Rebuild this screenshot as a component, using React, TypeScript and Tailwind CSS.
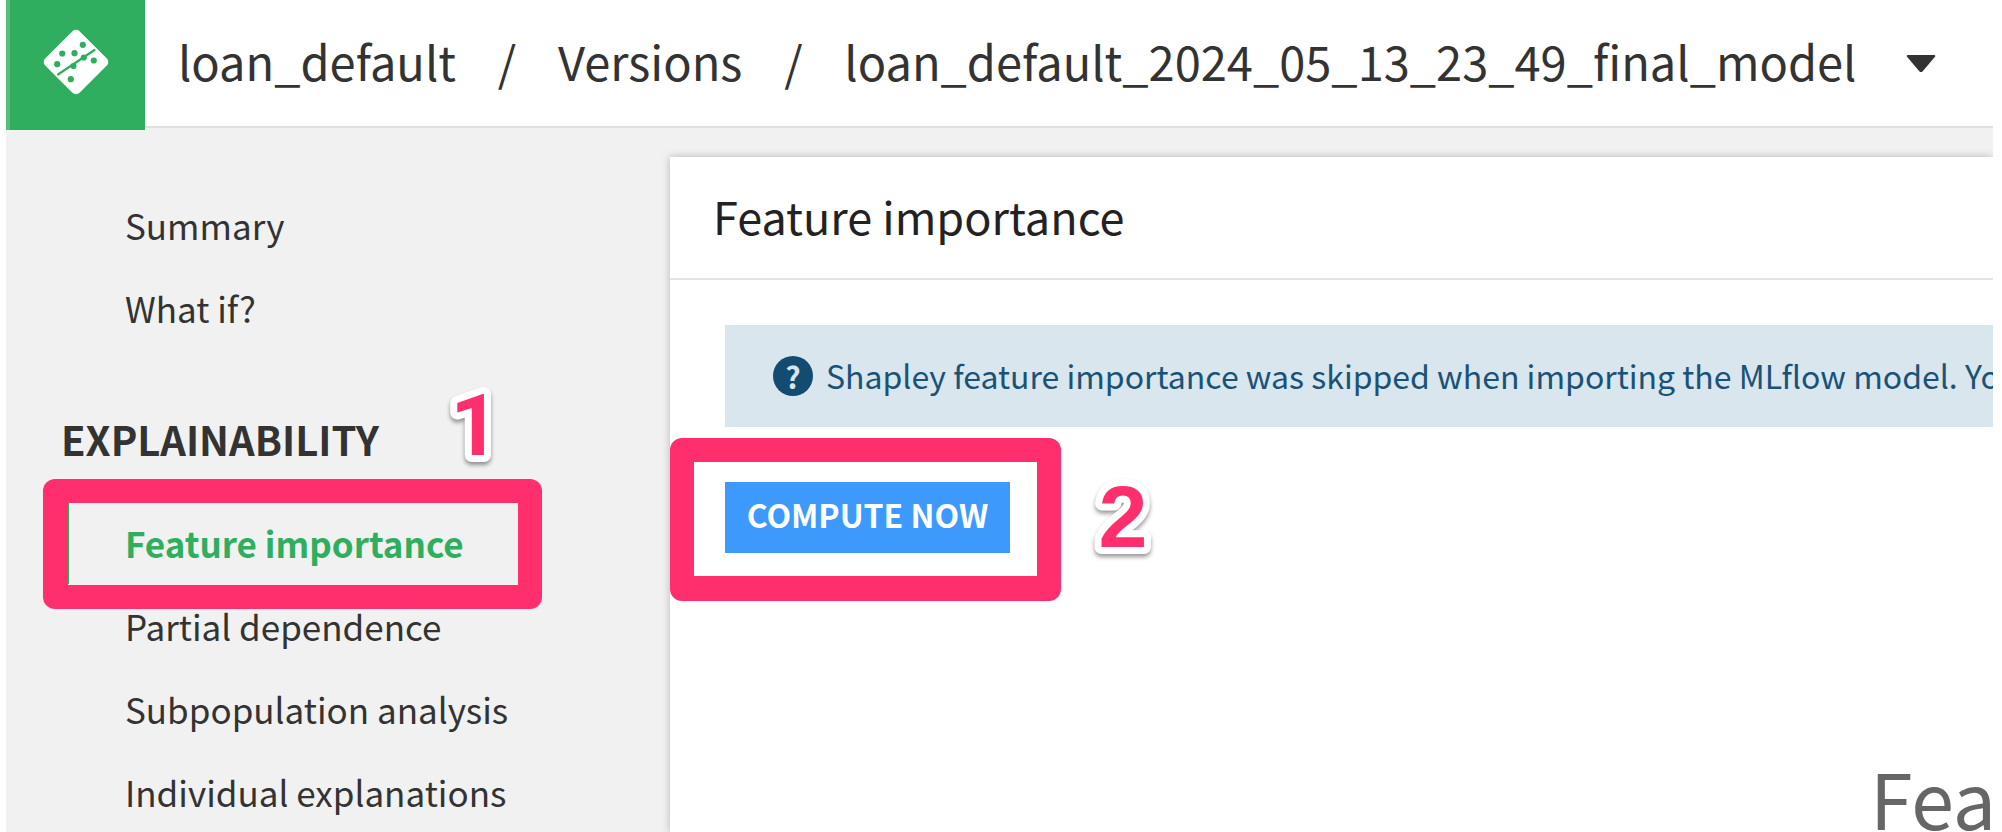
const topItems = ["Summary", "What if?"];
const explainItems = [
  "Feature importance",
  "Partial dependence",
  "Subpopulation analysis",
  "Individual explanations",
];

function Logo() {
  return (
    <svg viewBox="0 0 66 66" className="size-[66px]" aria-hidden="true">
      <rect x="8.700" y="8.700" width="48.600" height="48.600" rx="5" fill="#fff" transform="rotate(45 33 33)" />
      <g fill="#2eae5e">
        <circle cx="39.800" cy="15.800" r="3.100" />
        <circle cx="19.200" cy="24.500" r="3.100" />
        <circle cx="31.500" cy="24.200" r="3.100" />
        <circle cx="14.200" cy="35.200" r="3.100" />
        <circle cx="40.800" cy="28.500" r="3.100" />
        <circle cx="50.800" cy="31.500" r="3.100" />
        <circle cx="30.500" cy="37" r="3.100" />
        <circle cx="27.800" cy="50.200" r="3.100" />
      </g>
      <path d="M15 45.500 51.500 21" stroke="#2eae5e" strokeWidth="2.200" strokeLinecap="round" />
    </svg>
  );
}

function Marker({ label, className }: { label: string; className: string }) {
  return (
    <svg
      viewBox="0 0 60 90"
      className={`pointer-events-none absolute z-20 h-[90px] w-[60px] overflow-visible drop-shadow-[0_3px_2px_rgba(0,0,0,0.4)] ${className}`}
    >
      <text
        x="30"
        y="75"
        textAnchor="middle"
        fontWeight="700"
        fill="#ff2f6d"
        stroke="#fff"
        strokeWidth="14"
        strokeLinejoin="round"
        paintOrder="stroke"
      >
        {label}
      </text>
    </svg>
  );
}

function NavItem({ label, active = false }: { label: string; active?: boolean }) {
  return (
    <li className="relative ml-[60px]">
      <a
        href="#"
        className={
          active
            ? "block border-l-3 border-[#2eae5e] pl-[56px] text-[35px] leading-[83px] font-bold text-[#2eae5e]"
            : "block border-l-3 border-transparent pl-[56px] text-[35px] leading-[83px] text-[#333]"
        }
      >
        {label}
      </a>
      {active && (
        <span className="pointer-events-none absolute -top-[22px] -left-[23px] z-10 h-[130px] w-[499px] rounded-xl bg-[#ff2f6d] [clip-path:polygon(evenodd,0_0,100%_0,100%_100%,0_100%,0_0,25px_24px,475px_24px,475px_106px,25px_106px,25px_24px)]" />
      )}
    </li>
  );
}

export default function App() {
  return (
    <div className="flex h-screen flex-col overflow-hidden bg-white pr-[9px] pl-[6px] font-['Noto_Sans_CJK_JP',sans-serif] text-[#333]">
      <header className="z-10 flex h-[128px] shrink-0 items-start border-b-2 border-[#e0e0e0] bg-white">
        <a
          href="#"
          aria-label="Home"
          className="flex h-[130px] w-[139px] shrink-0 items-center justify-center border-l-4 border-[#54bd7c] bg-[#2eae5e] pr-[4px] pb-[6px]"
        >
          <Logo />
        </a>
        <nav className="flex items-center pl-[33px] text-[47px] leading-[122px] whitespace-nowrap">
          <a href="#">loan_default</a>
          <span className="w-[102px] text-center">/</span>
          <a href="#">Versions</a>
          <span className="w-[102px] text-center">/</span>
          <a href="#">loan_default_2024_05_13_23_49_final_model</a>
          <button type="button" aria-label="Switch version" className="ml-[50px] pt-[6px]">
            <svg viewBox="0 0 30 18" className="h-[18px] w-[30px]">
              <path d="M1.500 0h27q1.500 .5.500 1.800L16.500 16.500q-1.500 1.200-3 0L1 1.800Q0 .5 1.500 0Z" fill="#333" />
            </svg>
          </button>
        </nav>
      </header>

      <div className="flex min-h-0 flex-1 overflow-hidden bg-[#f1f1f1]">
        <aside className="w-[664px] shrink-0 pt-[55px]">
          <ul>
            {topItems.map((label) => (
              <NavItem key={label} label={label} />
            ))}
          </ul>
          <div className="relative mt-[60px] mb-[32px] ml-[55px]">
            <h2 className="text-[40px] leading-[60px] font-bold">EXPLAINABILITY</h2>
            <Marker label="1" className="-top-[29px] left-[384px] font-['Roboto',sans-serif] text-[86px]" />
          </div>
          <ul>
            {explainItems.map((label, i) => (
              <NavItem key={label} label={label} active={i === 0} />
            ))}
          </ul>
        </aside>

        <main className="mt-[29px] min-w-0 flex-1 bg-white shadow-[0_0_8px_rgba(0,0,0,0.25)]">
          <h1 className="border-b-2 border-[#e4e4e4] pb-[4px] pl-[43px] text-[45px] leading-[117px] text-[#222]">
            Feature importance
          </h1>
          <div className="mt-[45px] ml-[55px] flex h-[102px] items-center gap-[13px] overflow-hidden bg-[#d9e6ee] pl-[48px] text-[32px] whitespace-nowrap text-[#1a5277]">
            <span className="flex size-[40px] shrink-0 items-center justify-center rounded-full bg-[#144b70] text-[30px] leading-none font-bold text-[#d9e6ee]">
              ?
            </span>
            <p className="pb-[2px]">Shapley feature importance was skipped when importing the MLflow model. Yo</p>
          </div>
          <div className="relative mt-[55px] ml-[55px] w-fit">
            <button
              type="button"
              className="block h-[71px] w-[285px] bg-[#3d99fc] pb-[6px] text-[32px] leading-[65px] font-bold whitespace-nowrap text-white"
            >
              COMPUTE NOW
            </button>
            <span className="pointer-events-none absolute -top-[44px] -left-[55px] h-[163px] w-[391px] rounded-xl bg-[#ff2f6d] [clip-path:polygon(evenodd,0_0,100%_0,100%_100%,0_100%,0_0,24px_24px,367px_24px,367px_138px,24px_138px,24px_24px)]" />
            <Marker label="2" className="-top-[10px] left-[368px] font-['Liberation_Sans',sans-serif] text-[88px]" />
          </div>
          <p className="mt-[188px] ml-auto w-[123px] overflow-hidden text-[77px] leading-[112px] whitespace-nowrap text-[#666]">
            Fea
          </p>
        </main>
      </div>
    </div>
  );
}
